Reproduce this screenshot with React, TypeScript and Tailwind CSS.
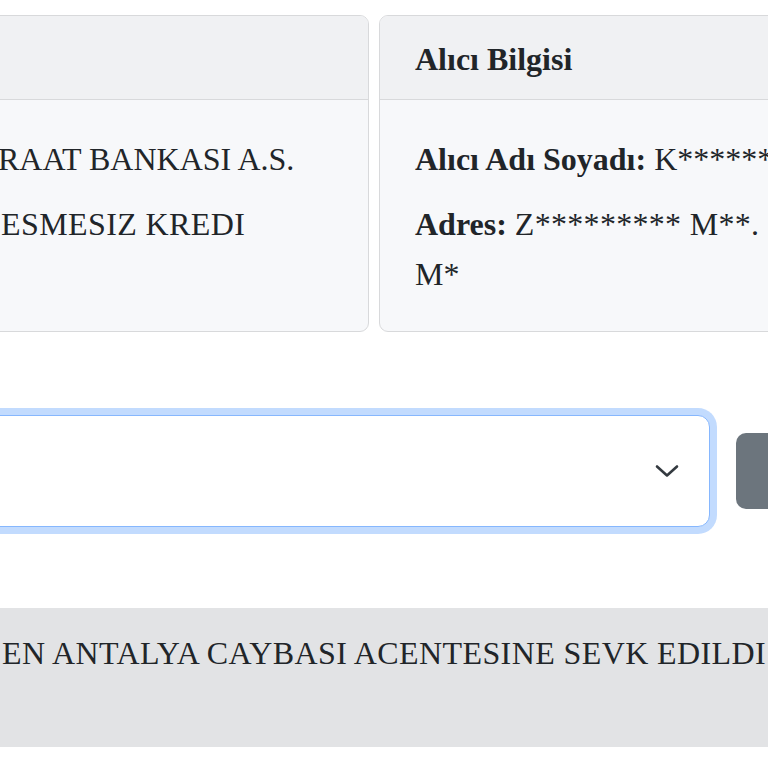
import React from 'react';

function Card({ width, pad, title, children }: { width: string; pad: string; title: string; children: React.ReactNode }) {
  return (
    <div className={`${width} shrink-0 overflow-hidden rounded-[9px] border border-[#d8d9db] bg-[#f7f8fa]`}>
      <div className={`border-b border-[#d8d9db] bg-[#f0f1f3] pt-[18px] pb-[15px] ${pad} font-bold leading-[50px] whitespace-nowrap`}>
        {title}
      </div>
      <div className={`pt-[34px] pb-[32px] ${pad} leading-[50px] whitespace-nowrap`}>{children}</div>
    </div>
  );
}

export default function App() {
  return (
    <div className="h-[768px] w-[768px] overflow-hidden bg-white font-['Liberation_Serif','Times_New_Roman',serif] text-[32px] text-[#212529]">
      <div className="ml-[-40px] mt-[15px] flex gap-[10px]">
        <Card width="w-[409px]" pad="pl-[38px] pr-[32px]" title={'\u00a0'}>
          <p className="mb-[15px] ml-[-1px]">RAAT BANKASI A.S.</p>
          <p className="ml-[2px] tracking-[0.4px]">ESMESIZ KREDI</p>
        </Card>
        <Card width="w-[640px]" pad="px-[35px]" title="Alıcı Bilgisi">
          <p className="mb-[15px]">
            <b>Alıcı Adı Soyadı:</b> K********* K*****
          </p>
          <p>
            <b>Adres:</b> <span className="tracking-[0.3px]">Z********* M**.</span>
            <br />
            M*
          </p>
        </Card>
      </div>

      <div className="ml-[-40px] mt-[83px] flex items-center gap-[26px]">
        <div className="flex h-[112px] w-[750px] shrink-0 items-center justify-end rounded-[12px] border border-[#86b7fe] bg-white pr-[30px] shadow-[0_0_0_7px_rgba(13,110,253,0.25)]">
          <svg width="24" height="14" viewBox="0 0 24 14" fill="none" aria-hidden="true">
            <path d="M2 2.5 L12 11.5 L22 2.5" stroke="#343a40" strokeWidth="2.6" strokeLinecap="round" strokeLinejoin="round" />
          </svg>
        </div>
        <div className="h-[76px] w-[140px] shrink-0 rounded-[10px] bg-[#6c757d]" />
      </div>

      <div className="ml-[-40px] mt-[81px] w-[900px] bg-[#e2e3e5] pl-[42px] pt-[21px] pb-[70px] leading-[48px] tracking-[0.4px] whitespace-nowrap">
        EN ANTALYA CAYBASI ACENTESINE SEVK EDILDI
      </div>
    </div>
  );
}
